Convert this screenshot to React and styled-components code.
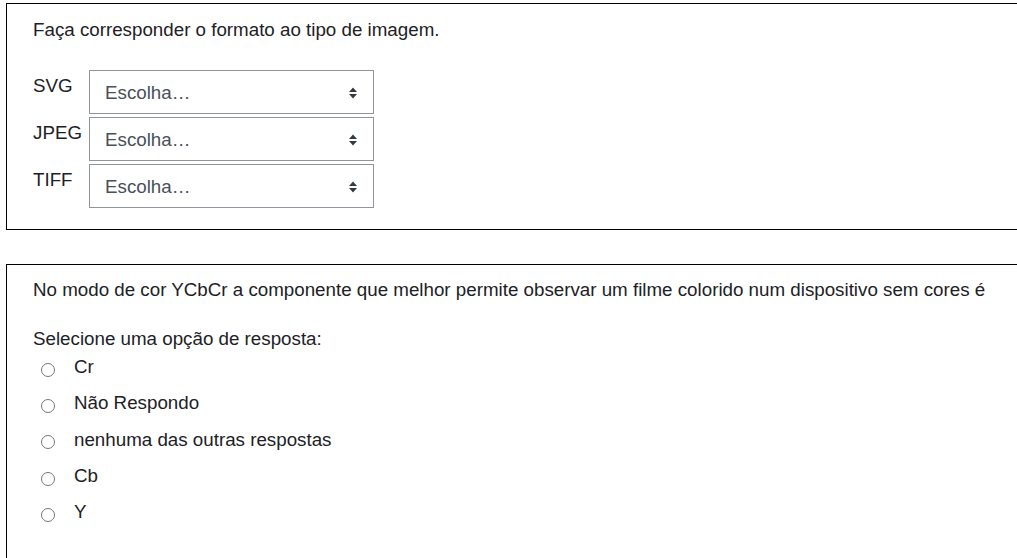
import React from 'react';
import styled, { createGlobalStyle } from 'styled-components';

const GlobalStyle = createGlobalStyle`
    html, body {
        margin: 0;
        padding: 0;
        background: #fff;
        overflow: hidden;
    }
    body {
        font-family: "Liberation Sans", Arial, sans-serif;
        color: #1d2125;
    }
`;

const Page = styled.div`
    width: 1017px;
    height: 558px;
    overflow: hidden;
    padding: 3px 0 0 6px;
    box-sizing: border-box;
`;

const QuestionBox = styled.div`
    width: 1060px;
    border: 1px solid #000;
    box-sizing: border-box;
    padding: ${p => p.$padding};
    margin-bottom: 34px;
`;

const Prompt = styled.div`
    font-size: 18.75px;
    line-height: 24px;
    color: #1d2125;
`;

const MatchTable = styled.div`
    display: flex;
    flex-direction: column;
    gap: 3px;
    margin-top: 28px;
`;

const MatchRow = styled.div`
    display: flex;
    align-items: flex-start;
`;

const MatchLabel = styled.div`
    width: 56px;
    font-size: 18.75px;
    line-height: 24px;
    padding-top: 4px;
`;

const SelectBox = styled.div`
    width: 285px;
    height: 44px;
    box-sizing: border-box;
    border: 1px solid #8f959e;
    display: flex;
    align-items: center;
    justify-content: space-between;
    padding: 1px 15px 0 15px;
    font-size: 18.75px;
    color: #495057;
`;

const Arrows = () => (
    <svg width="10" height="14" viewBox="0 0 10 14">
        <path d="M1 6 L5 1.5 L9 6 Z" fill="#343a40" />
        <path d="M1 8 L5 12.5 L9 8 Z" fill="#343a40" />
    </svg>
);

const Hint = styled.div`
    font-size: 18.75px;
    line-height: 24px;
    margin-top: 25px;
`;

const Options = styled.div`
    display: flex;
    flex-direction: column;
    margin-top: -2px;
`;

const Option = styled.label`
    display: flex;
    align-items: center;
    height: 36.3px;
    font-size: 18.75px;
    padding-left: 8px;
`;

const Radio = styled.span`
    width: 14px;
    height: 14px;
    border: 1px solid #767676;
    border-radius: 50%;
    box-sizing: border-box;
    margin-right: 19px;
    margin-top: 5px;
`;

const matches = ['SVG', 'JPEG', 'TIFF'];
const answers = ['Cr', 'Não Respondo', 'nenhuma das outras respostas', 'Cb', 'Y'];

export default function App() {
    return (
        <>
            <GlobalStyle />
            <Page>
                <QuestionBox $padding="14px 0 21px 26px">
                    <Prompt>Faça corresponder o formato ao tipo de imagem.</Prompt>
                    <MatchTable>
                        {matches.map((m) => (
                            <MatchRow key={m}>
                                <MatchLabel>{m}</MatchLabel>
                                <SelectBox>
                                    <span>Escolha…</span>
                                    <Arrows />
                                </SelectBox>
                            </MatchRow>
                        ))}
                    </MatchTable>
                </QuestionBox>
                <QuestionBox $padding="13px 0 40px 26px">
                    <Prompt>No modo de cor YCbCr a componente que melhor permite observar um filme colorido num dispositivo sem cores é</Prompt>
                    <Hint>Selecione uma opção de resposta:</Hint>
                    <Options>
                        {answers.map((a) => (
                            <Option key={a}>
                                <Radio />
                                {a}
                            </Option>
                        ))}
                    </Options>
                </QuestionBox>
            </Page>
        </>
    );
}
